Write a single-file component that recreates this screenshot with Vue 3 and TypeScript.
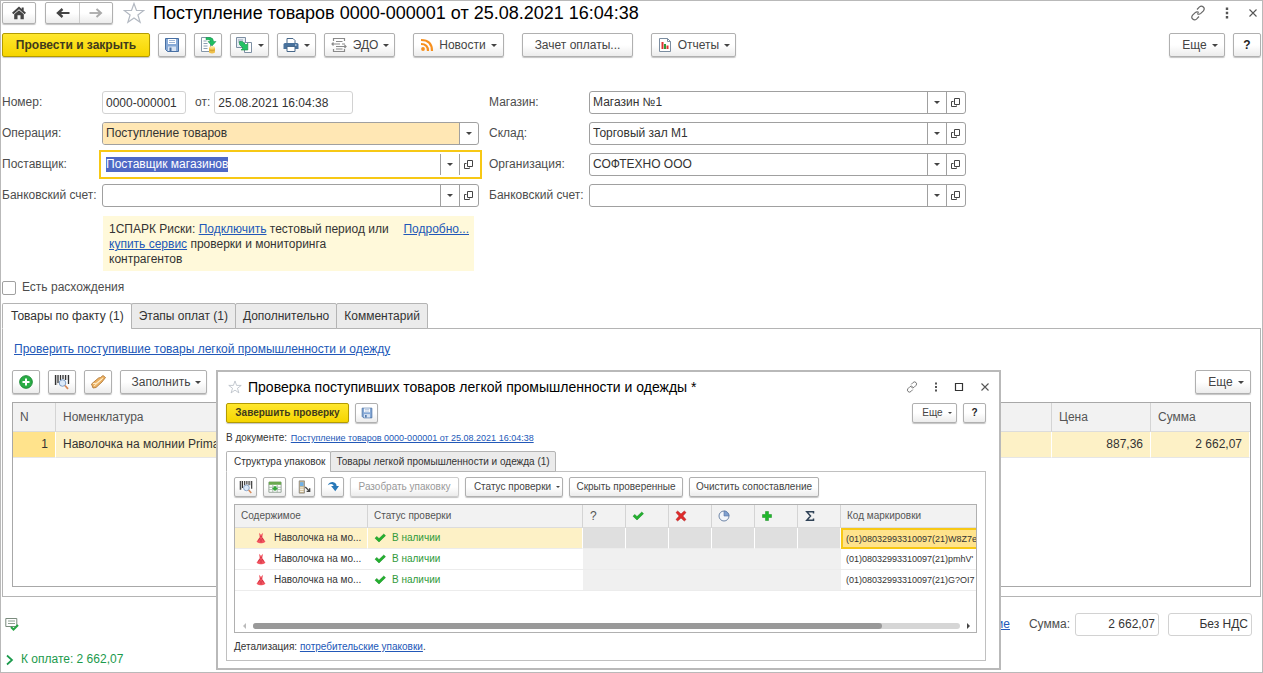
<script setup lang="ts">
import { onMounted, ref } from 'vue'

interface Field {
  id: string
  label: string
  value: string
}

interface MarkRow {
  name: string
  status: string
  code: string
}

const rightFields: Field[] = [
  { id: 'shop', label: 'Магазин:', value: 'Магазин №1' },
  { id: 'store', label: 'Склад:', value: 'Торговый зал М1' },
  { id: 'org', label: 'Организация:', value: 'СОФТЕХНО ООО' },
  { id: 'bank-org', label: 'Банковский счет:', value: '' },
]

const tabs: string[] = ['Товары по факту (1)', 'Этапы оплат (1)', 'Дополнительно', 'Комментарий']
const dialogTabs: string[] = ['Структура упаковок', 'Товары легкой промышленности и одежда (1)']
const activeTab = ref(0)
const activeDialogTab = ref(0)

const marks: MarkRow[] = [
  { name: 'Наволочка на мо...', status: 'В наличии', code: '(01)08032993310097(21)W8Z7e' },
  { name: 'Наволочка на мо...', status: 'В наличии', code: "(01)08032993310097(21)pmhV'" },
  { name: 'Наволочка на мо...', status: 'В наличии', code: '(01)08032993310097(21)G?OI7' },
]

const supplier = ref('Поставщик магазинов')
const supplierInput = ref<HTMLInputElement | null>(null)

onMounted(() => {
  supplierInput.value?.focus()
  supplierInput.value?.select()
})
</script>

<template>
  <svg class="defs" aria-hidden="true">
    <symbol id="home" viewBox="0 0 16 16">
      <path d="M8 1.500 1 7.800l1.400 1.500L8 4.300l5.600 5L15 7.800 12.700 5.700V2.500h-2v1.400z" fill="#444" />
      <path d="M3.200 9.300 8 5.200l4.800 4.100v5H9.500V10.300h-3v4H3.200z" fill="#444" />
    </symbol>
    <symbol id="back" viewBox="0 0 16 16"><path d="M14.500 8H4" fill="none" stroke="#444" stroke-width="2" /><path d="M7.500 4 3 8l4.500 4" fill="none" stroke="#444" stroke-width="2.400" /></symbol>
    <symbol id="fwd" viewBox="0 0 16 16"><path d="M1.500 8H12" fill="none" stroke="#aaa" stroke-width="1.800" /><path d="M8.500 4 13 8l-4.500 4" fill="none" stroke="#aaa" stroke-width="2" /></symbol>
    <symbol id="star" viewBox="0 0 22 22"><path d="m11 1.500 2.500 7h7.300l-5.900 4.500 2.200 7.200L11 15.900l-6.100 4.300 2.200-7.200L1.200 8.500h7.300z" fill="#fff" stroke="#b3b9c2" stroke-width="1.200" /></symbol>
    <symbol id="save" viewBox="0 0 16 16">
      <path d="M1.500 1.500h13v13h-11l-2-2z" fill="#86a9d6" stroke="#476fa3" />
      <path d="M4 2h8v5H4z" fill="#fff" /><path d="M5 3.500h6M5 5.500h6" stroke="#9db5d5" />
      <path d="M4 9.500h8V14H4z" fill="#d7e3f3" /><path d="M5.500 10.500h2V14h-2z" fill="#476fa3" />
    </symbol>
    <symbol id="post" viewBox="0 0 18 18">
      <path d="M2.500 1.500h9v14h-9z" fill="#fff" stroke="#8596a8" /><path d="M4.500 5h3M4.500 7.500h4M4.500 10h4M4.500 12.500h4" stroke="#8ea1b4" />
      <path d="M7 1.500h3.500q4 0 4 4H17L13 10 9 5.500h2.500q0-1.800-2-1.800H7z" fill="#1fbf62" stroke="#168d49" stroke-width=".5" />
      <path d="M10 11.500v5q3 2 6 0v-5z" fill="#efc04a" /><ellipse cx="13" cy="11.500" rx="3" ry="1.300" fill="#ffe18a" /><path d="M10 14q3 1.500 6 0" fill="none" stroke="#c9962c" stroke-width=".7" />
    </symbol>
    <symbol id="basis" viewBox="0 0 18 18">
      <path d="M1.500 1.500h9v10h-9z" fill="#e8eef4" stroke="#7d8fa3" /><path d="M9.500 6.500h7v10h-7z" fill="#fff" stroke="#7d8fa3" /><path d="M3 4h5M3 6h3" stroke="#92a4b7" />
      <path d="M4.500 5.500h3l3.500 3.500 1.800-1.800v6.800H6l2-2-3.500-3.500z" fill="#23c264" stroke="#158a45" stroke-width=".6" />
    </symbol>
    <symbol id="print" viewBox="0 0 16 16">
      <path d="M4 1.500h6l2 2V7H4z" fill="#fff" stroke="#48688a" /><path d="M2 6h12q1.500 0 1.500 1.500V12h-15V7.500Q.5 6 2 6" fill="#48719c" /><path d="M4 9.500h8v5H4z" fill="#fff" stroke="#48688a" /><path d="M12 8h1.500" stroke="#fff" />
    </symbol>
    <symbol id="edo" viewBox="0 0 18 18">
      <path d="M3.500 5V2.500h11V5M3.500 13v2.500h11V13M6 5.500h6.500M2 8h8M12 8h3M6 10.500h10M6 13h6.500M3.500 6.500 2 8l1.500 1.500M14.500 9l1.500 1.500L14.500 12" fill="none" stroke="#8a8a8a" stroke-width="1.200" />
    </symbol>
    <symbol id="rss" viewBox="0 0 14 14">
      <circle cx="3" cy="11" r="1.900" fill="#f7901e" /><path d="M1 6q7 0 7 7M1 2q11 0 11 11" fill="none" stroke="#f7901e" stroke-width="2.200" />
    </symbol>
    <symbol id="report" viewBox="0 0 16 16">
      <path d="M2.500 1.500h8l3 3v10h-11z" fill="#fff" stroke="#7b8da0" /><path d="M10.500 1.500v3h3" fill="none" stroke="#7b8da0" /><path d="M4.500 5h2v7h-2z" fill="#d33" /><path d="M7 7h2v5H7z" fill="#2a9a3a" /><path d="M9.500 8.500h2V12h-2z" fill="#d33" />
    </symbol>
    <symbol id="link" viewBox="0 0 16 16">
      <path d="m7 4.500 2.500-2.600q2-1.600 3.800.1t.1 3.800L10.800 8.400Q9 10 7.200 8.500M9 11.500l-2.500 2.600q-2 1.600-3.800-.1t-.1-3.800L5.200 7.600Q7 6 8.800 7.500" fill="none" stroke="#666" stroke-width="1.200" />
    </symbol>
    <symbol id="dots" viewBox="0 0 4 12"><path d="M.8.500h2.400v2.400H.8zM.8 4.800h2.400v2.400H.8zM.8 9.100h2.400v2.400H.8z" fill="#555" /></symbol>
    <symbol id="close" viewBox="0 0 10 10"><path d="m1.500 1.500 7 7m0-7-7 7" stroke="#555" stroke-width="1.100" /></symbol>
    <symbol id="square" viewBox="0 0 10 10"><path d="M1.500 1.500h7v7h-7z" fill="none" stroke="#333" stroke-width="1.200" /></symbol>
    <symbol id="open" viewBox="0 0 10 10"><path d="M3.500.5h5v6h-5zM2.500 3.500h-2v5h5v-1" fill="none" stroke="#444" /></symbol>
    <symbol id="plus" viewBox="0 0 14 14"><circle cx="7" cy="7" r="6.300" fill="#2aad46" stroke="#1c8a35" /><path d="M7 3.500v7M3.500 7h7" stroke="#fff" stroke-width="2" /></symbol>
    <symbol id="barcode" viewBox="0 0 16 16">
      <path d="M1.500 1v10M4 1v8M6.500 1v5M9 1v4M11.500 1v5M14.500 1v9" stroke="#333" stroke-width="1.300" /><path d="M2.800 1v10M13 1v5" stroke="#888" stroke-width=".6" />
      <circle cx="8.500" cy="9" r="3.300" fill="#dce9f8" stroke="#7d9cc4" /><path d="m11 11.500 3 3.300" stroke="#d98a58" stroke-width="1.800" />
    </symbol>
    <symbol id="hands" viewBox="0 0 16 16">
      <path d="M1.500 10 8.500 4l2-.5L13 1.500l2.500 2L12 8l-6 5.500-3 .5z" fill="#edb264" stroke="#a8702d" stroke-width=".8" /><path d="m4 12 8-7M3 9.500h3L13 4" fill="none" stroke="#fff0cf" stroke-width=".9" />
    </symbol>
    <symbol id="sheet" viewBox="0 0 16 14">
      <path d="M1 1.500h14v11.500H1z" fill="#fff" stroke="#8b9a8e" /><path d="M1 1h14v3.500H1z" fill="#6aa84f" /><path d="M1 7.300h14M1 10h14M5.500 4v9M10.500 4v9" stroke="#9fb3a2" /><path d="M6.500 6h3v2h2L8 11.500 4.500 8h2z" fill="#32a838" />
    </symbol>
    <symbol id="terminal" viewBox="0 0 16 16">
      <path d="M2.500 1h6v14h-6z" fill="#cdb98d" stroke="#777" stroke-width=".8" /><path d="M3.500 2.500h4v4.500h-4z" fill="#6fb0e8" /><path d="M3.500 9h4M3.500 11h4M3.500 13h4" stroke="#fff" /><path d="m9.500 8 5 5M14.500 9.500V13H11" fill="none" stroke="#444" stroke-width="1.500" />
    </symbol>
    <symbol id="turn" viewBox="0 0 16 16"><path d="M1 5.500Q3.500 1 8.500 1.500q4 .5 4.300 5H16L11 13.500 5.500 6.500h3.200q0-2-2.200-2.300T1 5.500" fill="#2878b8" /></symbol>
    <symbol id="dress" viewBox="0 0 12 14">
      <path d="M4 1v2.500l.8 2L.8 11.500q2 2 5.200 1.500 3.200.5 5.200-1.500l-4-6 .8-2V1L6 3.500z" fill="#f2545f" /><path d="M4.500 5.500h3M3 10l1.500-3M9 10 7.500 7M6 12V8" stroke="#c92f43" />
    </symbol>
    <symbol id="check" viewBox="0 0 12 10"><path d="M1 5.200 2.800 3.400 5 5.600 9.800 1l1.700 1.700L5 9z" fill="#22b02e" stroke="#168a22" stroke-width=".5" /></symbol>
    <symbol id="cross" viewBox="0 0 12 12"><path d="M1 2.500 2.700 1 6 4l3.300-3L11 2.500 7.900 6l3.100 3.500L9.300 11 6 8l-3.300 3L1 9.500 4.100 6z" fill="#e02b2b" stroke="#a91c1c" stroke-width=".5" /></symbol>
    <symbol id="pie" viewBox="0 0 12 12"><circle cx="6" cy="6" r="5" fill="#f2f6fb" stroke="#6f86a8" /><path d="M6 6V1a5 5 0 0 1 5 5z" fill="#7fa0cf" stroke="#5674a5" stroke-width=".6" /></symbol>
    <symbol id="add" viewBox="0 0 12 12"><path d="M4.500 1.500h3v3h3v3h-3v3h-3v-3h-3v-3h3z" fill="#1fb82b" stroke="#158a20" stroke-width=".5" /></symbol>
    <symbol id="sigma" viewBox="0 0 10 12"><path d="M8.500 3.500V1.800H1.800L5.500 6l-3.700 4.200h6.700V8.500" fill="none" stroke="#2f4256" stroke-width="1.500" /></symbol>
    <symbol id="listok" viewBox="0 0 14 14"><path d="M.8 1.500h11v8h-11z" fill="#fff" stroke="#7a8b7d" /><path d="M3 4h7M3 6.500h7" stroke="#8da091" /><path d="m6 10 2.500 2.500L13 8" fill="none" stroke="#27a644" stroke-width="2" /></symbol>
    <symbol id="chevron" viewBox="0 0 8 12"><path d="m1 1.500 5 4.500-5 4.500" fill="none" stroke="#1b9a4c" stroke-width="1.700" /></symbol>
  </svg>

  <main class="page">
    <header class="titlebar">
      <button class="btn nav" type="button" aria-label="Начальная страница"><svg class="i16"><use href="#home" /></svg></button>
      <div class="pair">
        <button type="button" aria-label="Назад"><svg class="i16"><use href="#back" /></svg></button>
        <button type="button" aria-label="Вперед"><svg class="i16"><use href="#fwd" /></svg></button>
      </div>
      <svg class="i22 star"><use href="#star" /></svg>
      <h1>Поступление товаров 0000-000001 от 25.08.2021 16:04:38</h1>
      <div class="window-tools">
        <button class="plain" type="button" aria-label="Ссылка"><svg class="i16"><use href="#link" /></svg></button>
        <button class="plain" type="button" aria-label="Меню"><svg class="idots"><use href="#dots" /></svg></button>
        <button class="plain" type="button" aria-label="Закрыть"><svg class="i10"><use href="#close" /></svg></button>
      </div>
    </header>

    <div class="toolbar commands">
      <button class="btn primary" type="button">Провести и закрыть</button>
      <button class="btn icon" type="button" aria-label="Записать"><svg class="i16"><use href="#save" /></svg></button>
      <button class="btn icon" type="button" aria-label="Провести"><svg class="i18"><use href="#post" /></svg></button>
      <button class="btn menu" type="button" aria-label="Создать на основании"><svg class="i18"><use href="#basis" /></svg><i class="arrow" /></button>
      <button class="btn menu" type="button" aria-label="Печать"><svg class="i16"><use href="#print" /></svg><i class="arrow" /></button>
      <button class="btn edo" type="button"><svg class="i18"><use href="#edo" /></svg>ЭДО<i class="arrow" /></button>
      <button class="btn news" type="button"><svg class="i14"><use href="#rss" /></svg>Новости<i class="arrow" /></button>
      <button class="btn offset" type="button">Зачет оплаты...</button>
      <button class="btn reports" type="button"><svg class="i16"><use href="#report" /></svg>Отчеты<i class="arrow" /></button>
      <button class="btn more push" type="button">Еще<i class="arrow" /></button>
      <button class="btn help" type="button">?</button>
    </div>

    <form class="form" @submit.prevent>
      <div class="column">
        <div class="row">
          <label for="number">Номер:</label>
          <div class="numbers">
            <input id="number" class="quiet number" value="0000-000001" />
            <label for="date">от:</label>
            <input id="date" class="quiet date" value="25.08.2021 16:04:38" />
          </div>
        </div>
        <div class="row">
          <label for="operation">Операция:</label>
          <div class="combo choice">
            <select id="operation"><option>Поступление товаров</option></select>
            <span class="cell"><i class="arrow" /></span>
          </div>
        </div>
        <div class="row">
          <label for="supplier">Поставщик:</label>
          <div class="combo focused">
            <input id="supplier" ref="supplierInput" v-model="supplier" />
            <button class="cell" type="button" aria-label="Выбрать"><i class="arrow" /></button>
            <button class="cell" type="button" aria-label="Открыть"><svg class="i10"><use href="#open" /></svg></button>
          </div>
        </div>
        <div class="row">
          <label for="bank-supplier">Банковский счет:</label>
          <div class="combo">
            <input id="bank-supplier" />
            <button class="cell" type="button" aria-label="Выбрать"><i class="arrow" /></button>
            <button class="cell" type="button" aria-label="Открыть"><svg class="i10"><use href="#open" /></svg></button>
          </div>
        </div>
      </div>
      <div class="column">
        <div v-for="f in rightFields" :key="f.id" class="row">
          <label :for="f.id">{{ f.label }}</label>
          <div class="combo">
            <input :id="f.id" :value="f.value" />
            <button class="cell" type="button" aria-label="Выбрать"><i class="arrow" /></button>
            <button class="cell" type="button" aria-label="Открыть"><svg class="i10"><use href="#open" /></svg></button>
          </div>
        </div>
      </div>
    </form>

    <aside class="notice">
      <p>1СПАРК Риски: <a href="#">Подключить</a> тестовый период или <a href="#">купить сервис</a> проверки и мониторинга контрагентов</p>
      <a href="#">Подробно...</a>
    </aside>

    <label class="differences"><input type="checkbox" />Есть расхождения</label>

    <div class="tabs" role="tablist">
      <button v-for="(t, i) in tabs" :key="t" class="tab" :class="{ active: i === activeTab }" type="button" role="tab" :aria-selected="i === activeTab" @click="activeTab = i">{{ t }}</button>
    </div>
    <section class="panel">
      <a class="verify" href="#">Проверить поступившие товары легкой промышленности и одежду</a>
      <div class="toolbar goods-tools">
        <button class="btn icon" type="button" aria-label="Добавить"><svg class="i14"><use href="#plus" /></svg></button>
        <button class="btn icon" type="button" aria-label="Поиск по штрихкоду"><svg class="i16"><use href="#barcode" /></svg></button>
        <button class="btn icon" type="button" aria-label="Подбор"><svg class="i16"><use href="#hands" /></svg></button>
        <button class="btn fill" type="button">Заполнить<i class="arrow" /></button>
        <button class="btn more push" type="button">Еще<i class="arrow" /></button>
      </div>
      <div class="goods">
        <table>
          <colgroup><col class="c-n" /><col /><col class="c-gap" /><col class="c-sum" /><col class="c-sum" /></colgroup>
          <thead><tr><th>N</th><th>Номенклатура</th><th /><th>Цена</th><th>Сумма</th></tr></thead>
          <tbody><tr><td class="num current">1</td><td>Наволочка на молнии Prima</td><td /><td class="num">887,36</td><td class="num">2 662,07</td></tr></tbody>
        </table>
      </div>
    </section>

    <footer class="totals">
      <svg class="i14 status"><use href="#listok" /></svg>
      <a class="push" href="#">ие</a>
      <label for="total">Сумма:</label>
      <input id="total" class="quiet total" value="2 662,07" />
      <input class="quiet total" aria-label="НДС" value="Без НДС" />
    </footer>
    <button class="payment" type="button"><svg class="ichev"><use href="#chevron" /></svg>К оплате: 2 662,07</button>

    <section class="dialog" role="dialog" aria-labelledby="dialog-title">
      <header class="dialog-title">
        <svg class="i14"><use href="#star" /></svg>
        <h2 id="dialog-title">Проверка поступивших товаров легкой промышленности и одежды *</h2>
        <div class="dialog-tools">
          <button class="plain" type="button" aria-label="Ссылка"><svg class="i12"><use href="#link" /></svg></button>
          <button class="plain" type="button" aria-label="Меню"><svg class="idots small"><use href="#dots" /></svg></button>
          <button class="plain" type="button" aria-label="Развернуть"><svg class="i10"><use href="#square" /></svg></button>
          <button class="plain" type="button" aria-label="Закрыть"><svg class="i10"><use href="#close" /></svg></button>
        </div>
      </header>
      <div class="dialog-commands">
        <button class="btn primary" type="button">Завершить проверку</button>
        <button class="btn icon" type="button" aria-label="Записать"><svg class="i12"><use href="#save" /></svg></button>
        <button class="btn more push" type="button">Еще<i class="arrow" /></button>
        <button class="btn help" type="button">?</button>
      </div>
      <p class="document">В документе: <a href="#">Поступление товаров 0000-000001 от 25.08.2021 16:04:38</a></p>
      <div class="tabs" role="tablist">
        <button v-for="(t, i) in dialogTabs" :key="t" class="tab" :class="{ active: i === activeDialogTab }" type="button" role="tab" :aria-selected="i === activeDialogTab" @click="activeDialogTab = i">{{ t }}</button>
      </div>
      <div class="dialog-panel">
        <div class="mark-tools">
          <button class="btn icon" type="button" aria-label="Поиск по коду"><svg class="i14"><use href="#barcode" /></svg></button>
          <button class="btn icon" type="button" aria-label="Загрузить"><svg class="i14"><use href="#sheet" /></svg></button>
          <button class="btn icon" type="button" aria-label="Терминал"><svg class="i14"><use href="#terminal" /></svg></button>
          <button class="btn icon" type="button" aria-label="Далее"><svg class="i12"><use href="#turn" /></svg></button>
          <button class="btn unpack" type="button" disabled>Разобрать упаковку</button>
          <button class="btn state" type="button">Статус проверки<i class="arrow" /></button>
          <button class="btn hide" type="button">Скрыть проверенные</button>
          <button class="btn clear" type="button">Очистить сопоставление</button>
        </div>
        <div class="marks">
          <table>
            <colgroup><col class="c-name" /><col class="c-status" /><col v-for="n in 6" :key="n" class="c-mark" /><col /></colgroup>
            <thead>
              <tr>
                <th>Содержимое</th><th>Статус проверки</th><th class="symbol">?</th>
                <th><svg class="i12"><use href="#check" /></svg></th>
                <th><svg class="i12"><use href="#cross" /></svg></th>
                <th><svg class="i12"><use href="#pie" /></svg></th>
                <th><svg class="i12"><use href="#add" /></svg></th>
                <th><svg class="i12"><use href="#sigma" /></svg></th>
                <th>Код маркировки</th>
              </tr>
            </thead>
            <tbody>
              <tr v-for="(m, i) in marks" :key="m.code" :class="{ selected: i === 0 }">
                <td class="name"><svg class="i12"><use href="#dress" /></svg>{{ m.name }}</td>
                <td class="state-cell"><svg class="i12"><use href="#check" /></svg>{{ m.status }}</td>
                <td v-for="n in 6" :key="n" class="blank" />
                <td class="code">{{ m.code }}</td>
              </tr>
            </tbody>
          </table>
          <div class="scroll"><i class="left" /><div class="track"><div class="thumb" /></div><i class="right" /></div>
        </div>
        <p class="detail">Детализация: <a href="#">потребительские упаковки</a>.</p>
      </div>
    </section>
  </main>
</template>

<style>
body {
  margin: 0;
  background: #fff;
}
</style>

<style scoped>
* { box-sizing: border-box; }
.defs { position: absolute; width: 0; height: 0; }
.page {
  position: relative;
  min-height: 100vh;
  padding: 1px 1px 0;
  border: 1px solid #b9b9b9;
  font: 12px/15px "Liberation Sans", Arial, sans-serif;
  color: #333;
}
button, input, select { font: inherit; color: inherit; margin: 0; }
button { padding: 0; cursor: pointer; }
svg { flex: none; display: block; }
a { color: #2258b8; text-decoration: underline; }
label { color: #4d4d4d; }
.i10 { width: 10px; height: 10px; }
.i12 { width: 12px; height: 12px; }
.i14 { width: 14px; height: 14px; }
.i16 { width: 16px; height: 16px; }
.i18 { width: 18px; height: 18px; }
.i22 { width: 22px; height: 22px; }
.idots { width: 4px; height: 12px; }
.idots.small { height: 10px; }
.ichev { width: 8px; height: 12px; }
.arrow { flex: none; border: 3px solid transparent; border-top-color: #444; border-bottom: 0; }
.push { margin-left: auto; }

.btn {
  flex: none;
  display: flex;
  align-items: center;
  justify-content: center;
  gap: 5px;
  height: 24px;
  border: 1px solid #b0b0b0;
  border-radius: 2px;
  background: linear-gradient(#fff 50%, #ececec);
  box-shadow: 0 1px 1px #c4c4c4;
  color: #444;
  white-space: nowrap;
}
.btn.primary {
  border-color: #b39b00;
  background: linear-gradient(#ffe72e, #f6d500);
  color: #403a1c;
  font-weight: bold;
}
.plain { display: flex; border: 0; background: none; }

.titlebar { display: flex; align-items: center; height: 22px; }
.btn.nav { width: 34px; height: 22px; }
.pair { display: flex; margin-left: 9px; border: 1px solid #b0b0b0; border-radius: 2px; background: linear-gradient(#fff 50%, #ececec); box-shadow: 0 1px 1px #c4c4c4; }
.pair button { display: flex; align-items: center; justify-content: center; width: 33px; height: 20px; border: 0; background: none; }
.pair button + button { border-left: 1px solid #ccc; }
.star { margin-left: 10px; }
h1 { margin: 0 0 0 8px; font-size: 18px; line-height: 22px; font-weight: normal; color: #000; white-space: nowrap; }
.window-tools { display: flex; align-items: center; gap: 19px; margin-left: auto; padding-right: 3px; }

.toolbar { display: flex; align-items: center; gap: 8px; }
.commands { margin-top: 9px; }
.commands .primary { width: 148px; }
.btn.icon { width: 28px; }
.btn.menu { width: 39px; }
.btn.edo { width: 71px; }
.btn.news { width: 91px; margin-left: 10px; }
.btn.offset { width: 111px; margin-left: 10px; }
.btn.reports { width: 85px; margin-left: 10px; }
.btn.more { width: 56px; padding-left: 6px; }
.btn.help { width: 28px; font-weight: bold; color: #222; }

.form { display: grid; grid-template-columns: 477px 477px; gap: 10px; margin-top: 34px; }
.column { display: grid; gap: 8px; }
.row { display: grid; grid-template-columns: 100px minmax(0, 1fr); grid-template-rows: 23px; align-items: center; }
.row > label { white-space: nowrap; }
.numbers { display: flex; align-items: center; }
.numbers label { margin: 0 4px 0 9px; }
.quiet { height: 23px; padding: 0 3px; border: 1px solid #d2d2d2; border-radius: 3px; background: #fff; }
.number { width: 84px; }
.date { width: 139px; }
.combo { display: flex; height: 23px; border: 1px solid #a0a0a0; border-radius: 3px; background: #fff; overflow: hidden; }
.combo input { flex: 1; min-width: 0; padding: 0 3px; border: 0; background: none; outline: none; }
.combo select { flex: 1; min-width: 0; padding: 0 3px; border: 0; background: #ffe7b4; appearance: none; outline: none; }
.cell { flex: none; display: flex; align-items: center; justify-content: center; width: 19px; border: 0; border-left: 1px solid #a0a0a0; background: none; }
.focused { height: 29px; margin: -3px; padding: 2px; border: 2px solid #f7c815; border-radius: 0; }
.focused input { padding: 0 3px; caret-color: transparent; }
.focused input::selection { background: #4f69c6; color: #fff; }

.notice { display: flex; justify-content: space-between; width: 371px; height: 55px; margin: 9px 0 0 101px; padding: 6px 5px 0 6px; background: #fff9da; line-height: 15px; }
.notice p { width: 282px; margin: 0; }
.differences { display: flex; align-items: center; gap: 6px; height: 15px; margin-top: 9px; }
.differences input { appearance: none; width: 14px; height: 14px; border: 1px solid #a0a0a0; border-radius: 2px; background: #fff; }

.tabs { display: flex; position: relative; z-index: 1; }
.tab { height: 26px; margin: 0 0 -1px -1px; padding: 0 7px; border: 1px solid #b4b4b4; border-radius: 2px 2px 0 0; background: #ebebeb; white-space: nowrap; }
.tab:first-child { margin-left: 0; padding-left: 8px; }
.tab.active { border-bottom-color: #fff; background: #fff; }
.page > .tabs { margin-top: 8px; }
.panel { padding: 13px 9px 9px; border: 1px solid #b4b4b4; }
.verify { margin-left: 2px; }
.goods-tools { margin-top: 13px; }
.btn.fill { width: 87px; padding-left: 6px; }
.goods { height: 185px; margin-top: 8px; border: 1px solid #a8a8a8; }
table { width: 100%; border-collapse: separate; border-spacing: 0; table-layout: fixed; }
th, td { overflow: hidden; padding: 0 8px; font-weight: normal; text-align: left; white-space: nowrap; }
th { border-right: 1px solid #d4d4d4; border-bottom: 1px solid #dcdcdc; background: #f2f2f2; color: #555; }
th:last-child, td:last-child { border-right: 0; }
.goods th { height: 29px; padding: 0 7px; }
.goods td { height: 26px; padding: 0 7px; border-right: 1px solid #fff; border-bottom: 1px solid #e6e6e6; background: #fdf1c6; }
.goods .num { text-align: right; }
.goods .current { background: #ffe38c; }
.c-n { width: 43px; }
.c-gap { width: 90px; }
.c-sum { width: 99px; }

.totals { display: flex; align-items: center; height: 24px; margin-top: 15px; padding-right: 9px; }
.status { margin-left: 3px; }
.totals label { margin: 0 5px 0 19px; }
.total { width: 84px; text-align: right; }
.total + .total { margin-left: 9px; }
.payment { display: flex; align-items: center; gap: 7px; height: 15px; margin: 16px 0 5px 4px; border: 0; background: none; color: #1b9a4c; }

.dialog {
  position: absolute;
  z-index: 2;
  top: 369px;
  left: 215px;
  right: 261px;
  padding: 6px 13px 7px 8px;
  border: 2px solid #b9b9b9;
  background: #fff;
  font-size: 10px;
  line-height: 12px;
}
.dialog-title { display: flex; align-items: center; height: 18px; padding-left: 2px; }
h2 { margin: 0 0 0 6px; font-size: 14px; line-height: 18px; font-weight: normal; color: #000; white-space: nowrap; }
.dialog-tools { display: flex; align-items: center; gap: 16px; margin: 0 -4px 0 auto; }
.dialog-commands { display: flex; gap: 6px; margin-top: 7px; }
.dialog .btn { height: 20px; }
.dialog .icon { width: 23px; }
.dialog .arrow { border-width: 2px; border-bottom: 0; }
.dialog-commands .primary { width: 123px; }
.dialog .more { width: 45px; padding-left: 5px; }
.dialog .help { width: 23px; }
.document { margin: 9px 0 7px; white-space: nowrap; }
.document a { margin-left: 1px; font-size: 9px; }
.dialog .tab { height: 21px; padding: 0 5px; }
.dialog .tab:first-child { padding-left: 7px; }
.dialog-panel { padding: 5px 8px 7px 7px; border: 1px solid #c0c0c0; }
.mark-tools { display: flex; gap: 6px; }
.btn.unpack { width: 109px; color: #999; border-color: #ccc; }
.btn.state { width: 98px; padding-left: 6px; }
.btn.hide { width: 114px; }
.btn.clear { width: 130px; }
.marks { margin-top: 7px; border: 1px solid #b0b0b0; }
.marks th { height: 23px; padding: 0 6px; }
.marks td { height: 21px; padding: 0 6px; border-bottom: 1px solid #ececec; }
.marks .symbol { padding: 0 7px; font-size: 12px; }
.marks .c-name { width: 133px; }
.c-status { width: 215px; }
.c-mark { width: 43px; }
.marks td svg, .marks th svg { display: inline-block; vertical-align: middle; }
.marks .name { padding: 0 0 0 20px; }
.name svg { margin-right: 7px; }
.state-cell { color: #2f9a3a; }
.state-cell svg { margin-right: 6px; }
.marks .code { padding: 0 0 0 5px; font-size: 9px; }
.blank { background: #f0f0f0; }
.selected td { background: #fdf1c6; border-right: 1px solid #fff; }
.selected .blank { background: #dfdfdf; }
.selected .code { padding: 0 0 0 3px; border: 2px solid #f7c815; border-right: 0; background: #ffe38c; }
.scroll { display: flex; align-items: center; gap: 7px; height: 12px; margin-top: 29px; padding: 0 6px 0 8px; }
.track { flex: 1; height: 6px; border-radius: 3px; background: #d6d6d6; }
.thumb { width: 89%; height: 6px; border-radius: 3px; background: #999; }
.left, .right { border: 3px solid transparent; }
.left { border-right-color: #bbb; border-left: 0; }
.right { border-left-color: #444; border-right: 0; }
.detail { margin: 8px 0 0; }
</style>
